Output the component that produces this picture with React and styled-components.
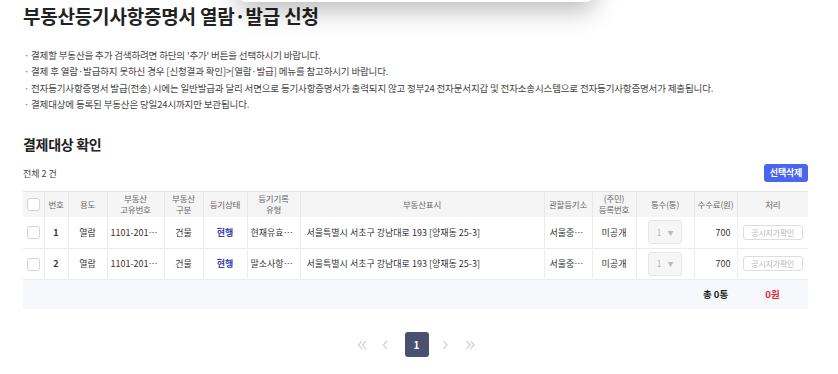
import React from "react";
import styled, { createGlobalStyle } from "styled-components";

const Global = createGlobalStyle`
  html, body { margin: 0; padding: 0; background: #fff; }
  body { font-family: "Noto Sans CJK KR", "Noto Sans", sans-serif; color: #333; }
  * { box-sizing: border-box; }
`;

const Page = styled.div`
  position: relative;
  width: 838px;
  height: 374px;
  overflow: hidden;
  padding: 0 30px 0 23px;
`;

const Popup = styled.div`
  position: absolute;
  left: 238px;
  top: -40px;
  width: 356px;
  height: 42px;
  background: #fff;
  border-radius: 0 0 8px 8px;
  box-shadow: 0 8px 26px rgba(0, 0, 0, 0.28);
`;

const Title = styled.h1`
  margin: 0;
  padding-top: 3px;
  font-size: 19px;
  line-height: 26px;
  font-weight: 700;
  color: #222;
  letter-spacing: -0.2px;
`;

const Notes = styled.ul`
  list-style: none;
  margin: 18px 0 0;
  padding: 0;
`;

const Note = styled.li`
  position: relative;
  padding-left: 8px;
  font-size: 9.5px;
  line-height: 16.4px;
  color: #444;
  letter-spacing: -0.15px;
  &::before {
    content: "·";
    position: absolute;
    left: 1px;
    top: 0;
    color: #666;
  }
`;

const SectionTitle = styled.h2`
  margin: 21px 0 0;
  font-size: 14px;
  line-height: 20px;
  font-weight: 700;
  color: #222;
  letter-spacing: -0.3px;
`;

const Toolbar = styled.div`
  display: flex;
  justify-content: space-between;
  align-items: flex-end;
  margin-top: 10px;
`;

const Count = styled.span`
  font-size: 9px;
  line-height: 12px;
  color: #444;
  margin-bottom: 2px;
`;

const DeleteButton = styled.button`
  width: 44px;
  height: 18px;
  border: none;
  border-radius: 3px;
  background: #4b66ee;
  color: #fff;
  font-family: inherit;
  font-size: 9px;
  font-weight: 700;
  padding: 0;
  letter-spacing: -0.2px;
`;

const Table = styled.table`
  width: 785px;
  margin-top: 9px;
  border-collapse: collapse;
  table-layout: fixed;
  border-top: 1px solid #e6e6e6;
`;

const Th = styled.th`
  height: 26px;
  background: #f5f5f5;
  font-weight: 400;
  font-size: 8.5px;
  line-height: 11px;
  color: #666;
  text-align: center;
  padding: 0 2px;
  border-left: 1px solid #e8e8e8;
  &:first-child { border-left: none; }
  white-space: pre-line;
  letter-spacing: -0.2px;
`;

const Td = styled.td`
  height: 31px;
  font-size: 9px;
  color: ${(p) => (p.$blue ? "#3344b0" : "#333")};
  font-weight: ${(p) => (p.$bold ? 600 : 400)};
  text-align: ${(p) => p.$align || "center"};
  padding: 0 ${(p) => (p.$pad != null ? p.$pad : 4)}px;
  border-left: 1px solid #ececec;
  border-bottom: 1px solid #ececec;
  &:first-child { border-left: none; }
  white-space: nowrap;
  overflow: hidden;
  text-overflow: ellipsis;
`;

const FootTd = styled.td`
  height: 30px;
  background: #f7f8fc;
  border-top: 1px solid #e4e4e4;
  font-size: 9.5px;
  font-weight: 700;
  text-align: center;
  color: ${(p) => (p.$red ? "#e3262e" : "#222")};
`;

const Check = styled.span`
  display: inline-block;
  width: 13px;
  height: 13px;
  border: 1px solid #d4d4d4;
  border-radius: 3px;
  background: #fff;
  vertical-align: middle;
`;

const Select = styled.span`
  display: inline-flex;
  align-items: center;
  justify-content: center;
  gap: 6px;
  width: 34px;
  height: 24px;
  border: 1px solid #e6e6e6;
  border-radius: 3px;
  background: #f6f6f6;
  color: #bbb;
  font-size: 9px;
  vertical-align: middle;
`;

const Caret = styled.span`
  font-size: 6px;
  color: #bbb;
`;

const GhostButton = styled.span`
  display: inline-flex;
  align-items: center;
  justify-content: center;
  width: 60px;
  height: 15px;
  border: 1px solid #ddd;
  border-radius: 3px;
  background: #fff;
  color: #bbb;
  font-size: 8px;
  vertical-align: middle;
  letter-spacing: -0.2px;
`;

const Pager = styled.nav`
  display: flex;
  justify-content: center;
  align-items: center;
  margin-top: 23px;
`;

const PageArrow = styled.span`
  display: inline-flex;
  align-items: center;
  justify-content: center;
  width: 24px;
  height: 25px;
`;

const PageNum = styled.span`
  display: inline-flex;
  align-items: center;
  justify-content: center;
  width: 24px;
  height: 25px;
  border-radius: 3px;
  background: #4a5070;
  color: #fff;
  font-size: 10px;
  font-weight: 700;
  margin: 0 5px 0 7px;
`;

const cols = [21, 24, 39, 57, 39, 44, 53, 244, 48, 44, 58, 43, 71];

const headers = [
  "",
  "번호",
  "용도",
  "부동산\n고유번호",
  "부동산\n구분",
  "등기상태",
  "등기기록\n유형",
  "부동산표시",
  "관할등기소",
  "(주민)\n등록번호",
  "통수(통)",
  "수수료(원)",
  "처리",
];

const rows = [
  { no: 1, type: "현재유효사항" },
  { no: 2, type: "말소사항포함" },
];

const Chevron = ({ dir, double }) => {
  const single = dir === "left" ? "M6 2 L2.5 6 L6 10" : "M2.5 2 L6 6 L2.5 10";
  const second = dir === "left" ? "M10 2 L6.5 6 L10 10" : "M6.5 2 L10 6 L6.5 10";
  return (
    <svg width={double ? 12 : 9} height="12" viewBox={double ? "0 0 12 12" : "0 0 9 12"} fill="none" stroke="#c8c8c8" strokeWidth="1.1">
      <path d={single} />
      {double && <path d={second} />}
    </svg>
  );
};

export default function App() {
  return (
    <>
      <Global />
      <Page>
        <Popup />
        <Title>부동산등기사항증명서 열람·발급 신청</Title>
        <Notes>
          <Note>결제할 부동산을 추가 검색하려면 하단의 '추가' 버튼을 선택하시기 바랍니다.</Note>
          <Note>결제 후 열람·발급하지 못하신 경우 [신청결과 확인]&gt;[열람·발급] 메뉴를 참고하시기 바랍니다.</Note>
          <Note>전자등기사항증명서 발급(전송) 시에는 일반발급과 달리 서면으로 등기사항증명서가 출력되지 않고 정부24 전자문서지갑 및 전자소송시스템으로 전자등기사항증명서가 제출됩니다.</Note>
          <Note>결제대상에 등록된 부동산은 당일24시까지만 보관됩니다.</Note>
        </Notes>
        <SectionTitle>결제대상 확인</SectionTitle>
        <Toolbar>
          <Count>전체 2 건</Count>
          <DeleteButton>선택삭제</DeleteButton>
        </Toolbar>
        <Table>
          <colgroup>
            {cols.map((w, i) => (
              <col key={i} style={{ width: w }} />
            ))}
          </colgroup>
          <thead>
            <tr>
              {headers.map((h, i) => (
                <Th key={i}>{i === 0 ? <Check /> : h}</Th>
              ))}
            </tr>
          </thead>
          <tbody>
            {rows.map((r) => (
              <tr key={r.no}>
                <Td $pad={0}><Check /></Td>
                <Td $bold>{r.no}</Td>
                <Td>열람</Td>
                <Td $pad={3}>1101-2019-012345</Td>
                <Td>건물</Td>
                <Td $blue $bold>현행</Td>
                <Td $pad={3}>{r.type}</Td>
                <Td $align="left" $pad={6}>서울특별시 서초구 강남대로 193 [양재동 25-3]</Td>
                <Td $pad={5}>서울중앙지방법원</Td>
                <Td>미공개</Td>
                <Td>
                  <Select>1 <Caret>▼</Caret></Select>
                </Td>
                <Td $align="right" $pad={6}>700</Td>
                <Td $pad={0}>
                  <GhostButton>공시지가확인</GhostButton>
                </Td>
              </tr>
            ))}
          </tbody>
          <tfoot>
            <tr>
              <FootTd colSpan={11} />
              <FootTd>총 0통</FootTd>
              <FootTd $red>0원</FootTd>
            </tr>
          </tfoot>
        </Table>
        <Pager>
          <PageArrow><Chevron dir="left" double /></PageArrow>
          <PageArrow><Chevron dir="left" /></PageArrow>
          <PageNum>1</PageNum>
          <PageArrow><Chevron dir="right" /></PageArrow>
          <PageArrow><Chevron dir="right" double /></PageArrow>
        </Pager>
      </Page>
    </>
  );
}
